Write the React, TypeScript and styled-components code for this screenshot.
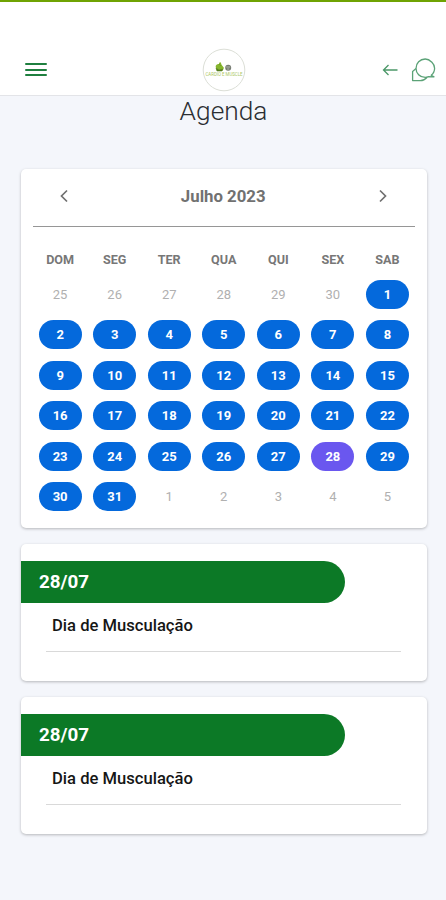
import React from "react";
import styled, { createGlobalStyle } from "styled-components";

const GlobalStyle = createGlobalStyle`
  * { box-sizing: border-box; }
  body {
    margin: 0;
    background: #f4f6fb;
    font-family: Roboto, "Liberation Sans", sans-serif;
  }
`;

const Screen = styled.div`
  width: 446px;
  height: 900px;
  overflow: hidden;
  background: #f4f6fb;
`;

const Header = styled.header`
  height: 96px;
  padding: 42px 10px 0 11px;
  display: grid;
  grid-template-columns: 1fr 44px 1fr;
  align-items: center;
  background: #fff;
  border-top: 2px solid #6fa303;
  border-bottom: 1px solid #e3e4e8;
`;

const MenuButton = styled.button`
  display: flex;
  flex-direction: column;
  gap: 3.5px;
  width: 22px;
  margin-left: 14px;
  padding: 0;
  border: 0;
  background: none;
`;

const MenuBar = styled.span`
  height: 2px;
  border-radius: 1px;
  background: #1f7f3f;
`;

const Actions = styled.div`
  display: flex;
  justify-content: flex-end;
  align-items: center;
  gap: 13px;
`;

const Title = styled.h1`
  margin: 0;
  height: 73px;
  padding-left: 1px;
  font-size: 26.3px;
  line-height: 30px;
  font-weight: 300;
  text-align: center;
  color: #2b2e33;
`;

const Card = styled.section`
  width: 405.5px;
  margin: 0 0 16px 21px;
  border-radius: 5px;
  background: #fff;
  box-shadow: 0 1px 3px rgba(0, 0, 0, 0.26);
`;

const CalendarCard = styled(Card)`
  height: 359px;
  padding: 0 12px;
`;

const MonthBar = styled.div`
  height: 58px;
  padding: 0 27px 3px 26px;
  display: flex;
  justify-content: space-between;
  align-items: center;
  border-bottom: 1px solid #969696;
`;

const Month = styled.h2`
  margin: 0;
  font-size: 16.8px;
  font-weight: 700;
  color: #717171;
`;

const WeekGrid = styled.div`
  display: grid;
  grid-template-columns: repeat(7, 54.55px);
  justify-content: center;
  justify-items: center;
`;

const Weekdays = styled(WeekGrid)`
  margin-top: 24px;
  height: 29px;
`;

const Weekday = styled.span`
  font-size: 12.6px;
  line-height: 18px;
  font-weight: 700;
  color: #777;
`;

const Days = styled(WeekGrid)`
  grid-auto-rows: 40.45px;
`;

type DayKind = "outside" | "event" | "selected";

const dayFill: Record<DayKind, string> = {
  outside: "transparent",
  event: "#0469dc",
  selected: "#6a57ef",
};

const Day = styled.span<{ $kind: DayKind }>`
  width: 43px;
  height: 29px;
  border-radius: 15px;
  font-size: 13px;
  line-height: 29px;
  text-align: center;
  font-weight: ${({ $kind }) => ($kind === "outside" ? 400 : 700)};
  color: ${({ $kind }) => ($kind === "outside" ? "#b0b0b0" : "#fff")};
  background: ${({ $kind }) => dayFill[$kind]};
`;

const EventCard = styled(Card)`
  height: 137px;
  padding-top: 17px;
`;

const DateRibbon = styled.div`
  width: 324px;
  height: 41.5px;
  padding-left: 18px;
  border-radius: 0 21px 21px 0;
  background: #0c7926;
  color: #fff;
  font-size: 18.8px;
  line-height: 42px;
  font-weight: 700;
`;

const EventName = styled.p`
  width: 355px;
  height: 49.5px;
  margin: 0 0 0 25px;
  padding-left: 6px;
  border-bottom: 1px solid #d9d9d9;
  color: #161616;
  font-size: 16.6px;
  line-height: 45px;
  font-weight: 500;
`;

const Logo = () => (
  <svg width="44" height="44" viewBox="0 0 44 44">
    <circle cx="22" cy="22" r="20.8" fill="#fff" stroke="#dcdfd7" />
    <path d="M14 20c-1-3 1-4 3-4 0-2 2-2 2-1 0 2 2 3 3 5l-2 3h-5z" fill="#86b62e" />
    <path d="M14 20l3 2 4-1-1 2h-5zM17 16l2 2" fill="#4b741c" stroke="#648c28" strokeWidth=".6" />
    <circle cx="26.2" cy="19.8" r="3" fill="#777c73" />
    <path d="M24.2 19h4M25.2 21h2" stroke="#dce0d8" strokeWidth=".6" />
    <text x="22" y="27.8" textAnchor="middle" textLength="37" lengthAdjust="spacingAndGlyphs" fontFamily="Roboto, sans-serif" fontSize="4.5" fill="#a9c660">CARDIO E MUSCLE</text>
  </svg>
);

const BackArrow = () => (
  <svg width="16" height="14" viewBox="0 0 16 14" fill="none" stroke="#4b9868" strokeWidth="1.3">
    <path d="M15.5 7H1.5M6.5 2L1.5 7l5 5" />
  </svg>
);

const ChatIcon = () => (
  <svg width="25" height="24" viewBox="0 0 25 24" fill="none" stroke="#5ba277" strokeWidth="1.3" strokeLinejoin="round">
    <path d="M20.2 17.3q3.4-2.7 3.4-7c0-2-1-4.300-2.700-6S16.800 1 14.200 1 9.300 2 7.600 3.700 5 8 5 10.400s1 4.600 2.600 6.300 4 2.600 6.600 2.600q1.800 0 3.300-.6l5.500.1z" />
    <path d="M5 10.600L1.600 13.400v9.200h7.600q4 0 7-3.400" />
  </svg>
);

const Chevron = ({ d }: { d: string }) => (
  <svg width="10" height="14" viewBox="0 0 10 14" fill="none" stroke="#707070" strokeWidth="1.7">
    <path d={d} />
  </svg>
);

const weekdays = ["DOM", "SEG", "TER", "QUA", "QUI", "SEX", "SAB"];

const range = (from: number, to: number) =>
  Array.from({ length: to - from + 1 }, (_, i) => from + i);

const days: { n: number; kind: DayKind }[] = [
  ...range(25, 30).map((n) => ({ n, kind: "outside" as DayKind })),
  ...range(1, 31).map((n) => ({ n, kind: (n === 28 ? "selected" : "event") as DayKind })),
  ...range(1, 5).map((n) => ({ n, kind: "outside" as DayKind })),
];

const events = [
  { id: 1, date: "28/07", name: "Dia de Musculação" },
  { id: 2, date: "28/07", name: "Dia de Musculação" },
];

export default function App() {
  return (
    <>
      <GlobalStyle />
      <Screen>
        <Header>
          <MenuButton aria-label="Menu">
            <MenuBar />
            <MenuBar />
            <MenuBar />
          </MenuButton>
          <Logo />
          <Actions>
            <BackArrow />
            <ChatIcon />
          </Actions>
        </Header>
        <Title>Agenda</Title>
        <CalendarCard>
          <MonthBar>
            <Chevron d="M8 1.5L2.5 7 8 12.5" />
            <Month>Julho 2023</Month>
            <Chevron d="M2 1.5L7.5 7 2 12.5" />
          </MonthBar>
          <Weekdays>
            {weekdays.map((d) => (
              <Weekday key={d}>{d}</Weekday>
            ))}
          </Weekdays>
          <Days>
            {days.map(({ n, kind }, i) => (
              <Day key={i} $kind={kind}>{n}</Day>
            ))}
          </Days>
        </CalendarCard>
        {events.map((e) => (
          <EventCard key={e.id}>
            <DateRibbon>{e.date}</DateRibbon>
            <EventName>{e.name}</EventName>
          </EventCard>
        ))}
      </Screen>
    </>
  );
}
